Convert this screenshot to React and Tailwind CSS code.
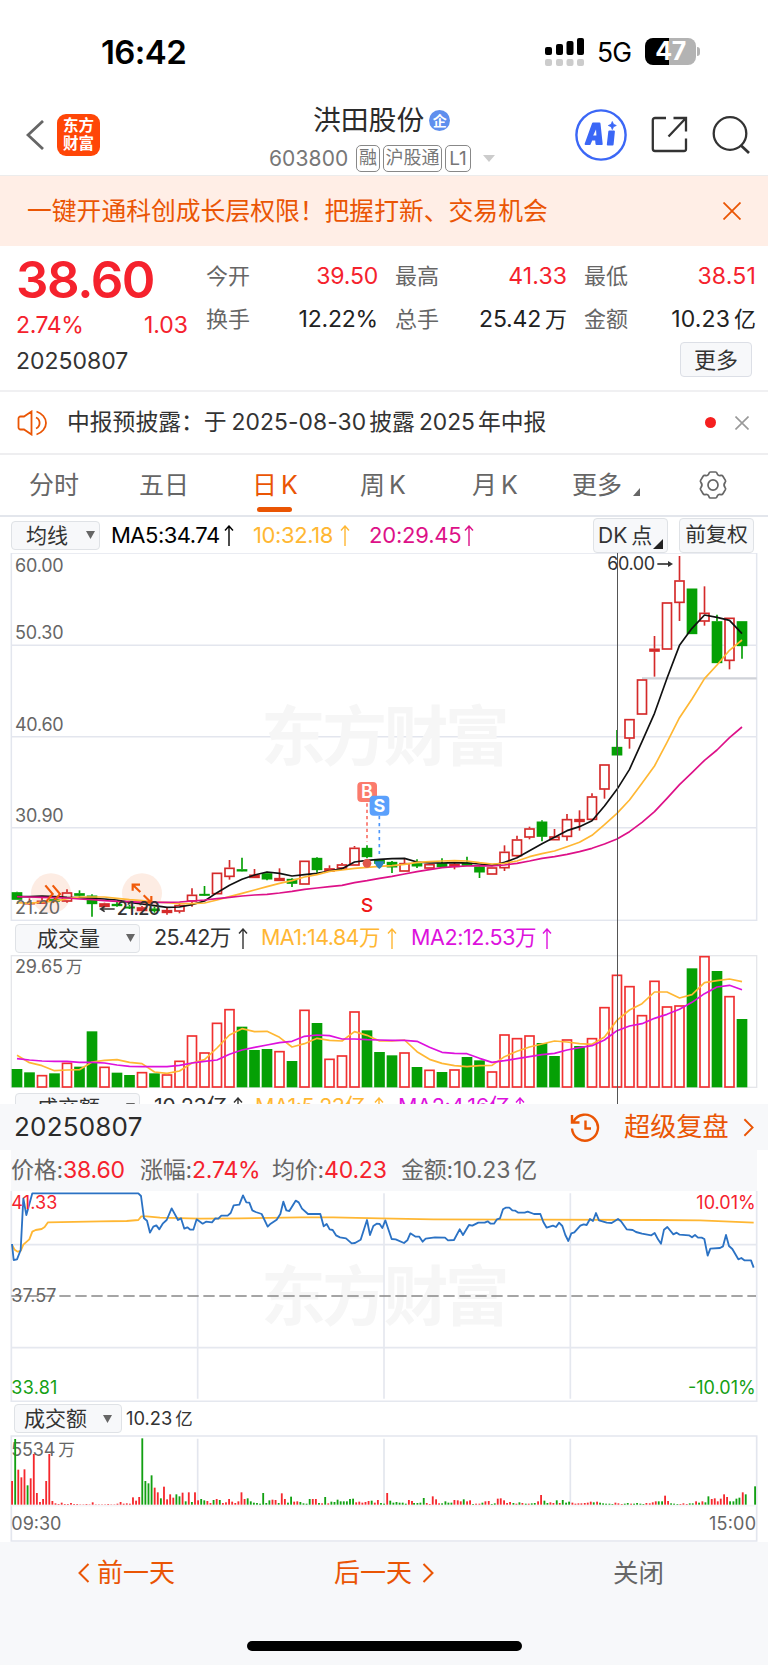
import React from "react";

const RED = "#f5222d";

/* ---------- data: chart coordinates are thirds of a CSS pixel ---------- */

// [direction, high, body top, body bottom, low]
const candles = [
  ["g", 1145, 1147, 1168, 1168], ["r", 1165, 1178, 1182, 1185], ["r", 1163, 1172, 1180, 1180], ["g", 1164, 1168, 1174, 1174],
  ["r", 1138, 1147, 1174, 1178], ["g", 1141, 1150, 1156, 1160], ["g", 1153, 1157, 1181, 1220], ["r", 1178, 1180, 1190, 1192],
  ["g", 1176, 1182, 1187, 1190], ["g", 1184, 1190, 1194, 1197], ["r", 1188, 1192, 1202, 1202], ["g", 1190, 1196, 1202, 1208],
  ["r", 1193, 1200, 1208, 1214], ["r", 1178, 1185, 1204, 1210], ["r", 1135, 1154, 1174, 1190], ["g", 1128, 1152, 1156, 1158],
  ["r", 1088, 1088, 1152, 1152], ["r", 1050, 1073, 1100, 1109], ["g", 1043, 1078, 1083, 1084], ["r", 1077, 1094, 1103, 1103],
  ["g", 1085, 1090, 1107, 1111], ["r", 1075, 1104, 1112, 1112], ["g", 1105, 1107, 1120, 1131], ["r", 1052, 1052, 1123, 1123],
  ["g", 1042, 1044, 1079, 1088], ["r", 1066, 1075, 1084, 1086], ["r", 1059, 1063, 1075, 1080], ["r", 1008, 1013, 1066, 1066],
  ["g", 1006, 1014, 1040, 1045], ["g", 1048, 1050, 1060, 1062], ["g", 1053, 1056, 1071, 1089], ["r", 1047, 1059, 1084, 1084],
  ["g", 1048, 1060, 1068, 1074], ["r", 1062, 1062, 1075, 1075], ["g", 1045, 1060, 1070, 1072], ["r", 1058, 1062, 1070, 1078],
  ["g", 1040, 1058, 1066, 1068], ["g", 1068, 1070, 1086, 1104], ["r", 1072, 1072, 1093, 1093], ["r", 1006, 1025, 1074, 1083],
  ["r", 977, 988, 1038, 1040], ["r", 950, 955, 982, 988], ["g", 931, 935, 979, 994], ["r", 957, 979, 990, 990],
  ["r", 912, 927, 980, 992], ["r", 901, 927, 935, 962], ["r", 850, 859, 929, 932], ["r", 763, 763, 838, 866],
  ["g", 660, 711, 735, 735], ["r", 627, 627, 685, 716], ["r", 508, 508, 613, 613], ["r", 378, 416, 424, 500],
  ["r", 277, 277, 418, 418], ["r", 138, 211, 278, 333], ["g", 236, 236, 371, 371], ["r", 229, 308, 334, 347],
  ["g", 314, 334, 458, 458], ["r", 323, 323, 452, 478], ["g", 334, 334, 407, 446],
];

const ma5 = [1160, 1160, 1158, 1160, 1162, 1163, 1165, 1167, 1170, 1177, 1182, 1187, 1192, 1191, 1184, 1173, 1148, 1126, 1108, 1095, 1086, 1090, 1098, 1094, 1090, 1083, 1076, 1056, 1051, 1048, 1046, 1045, 1056, 1059, 1059, 1058, 1059, 1062, 1066, 1057, 1043, 1022, 1001, 982, 962, 950, 932, 888, 838, 778, 695, 610, 505, 406, 355, 315, 322, 331, 371];
const ma10 = [1178, 1180, 1176, 1174, 1166, 1161, 1161, 1161, 1165, 1169, 1172, 1176, 1178, 1181, 1181, 1179, 1170, 1160, 1150, 1140, 1130, 1120, 1112, 1101, 1094, 1084, 1080, 1075, 1072, 1069, 1067, 1063, 1057, 1055, 1053, 1052, 1053, 1058, 1062, 1060, 1053, 1040, 1031, 1023, 1010, 997, 976, 944, 910, 870, 820, 768, 697, 623, 567, 506, 465, 421, 390];
const ma20 = [1160, 1161, 1162, 1163, 1164, 1167, 1169, 1172, 1174, 1175, 1177, 1177, 1177, 1176, 1173, 1170, 1166, 1162, 1158, 1155, 1153, 1149, 1144, 1138, 1134, 1130, 1126, 1118, 1112, 1105, 1099, 1092, 1085, 1079, 1073, 1070, 1068, 1067, 1068, 1065, 1060, 1053, 1045, 1040, 1033, 1025, 1015, 1002, 987, 965, 937, 905, 865, 824, 788, 751, 720, 683, 651];

const volumes = [477, 487, 495, 490, 458, 470, 364, 470, 488, 495, 486, 490, 493, 452, 376, 427, 338, 297, 350, 420, 417, 423, 453, 299, 339, 446, 436, 304, 361, 426, 436, 427, 471, 479, 486, 478, 441, 451, 484, 373, 384, 376, 399, 438, 388, 408, 384, 291, 194, 228, 315, 212, 289, 286, 175, 138, 183, 258, 327];
const volumeDirs = "ggrgrggrggrgrrrrrrgggrgrgrrrgggrgrgrggrrrrggrgrrrrrrrrgrgrg";
const vma1 = [436, 458, 467, 482, 480, 479, 456, 451, 449, 457, 461, 486, 490, 483, 459, 449, 414, 375, 356, 365, 364, 382, 411, 401, 385, 391, 393, 365, 376, 393, 393, 390, 425, 448, 460, 467, 470, 467, 466, 440, 424, 411, 402, 393, 396, 401, 403, 381, 331, 300, 281, 246, 246, 264, 254, 218, 212, 207, 215];
const vma2 = [446, 450, 453, 454, 454, 457, 457, 459, 465, 469, 470, 470, 470, 466, 459, 454, 450, 433, 420, 412, 405, 398, 394, 379, 375, 377, 387, 387, 389, 390, 391, 391, 394, 412, 427, 430, 431, 445, 457, 452, 446, 440, 434, 430, 420, 413, 407, 390, 362, 348, 341, 325, 313, 298, 277, 251, 231, 226, 239];

const intradayPrice =
  "36,312 41,360 51,358 62,330 70,175 79,225 97,160 415,160 423,168 432,235 441,242 450,278 460,260 469,256 478,268 489,250 500,240 515,205 534,240 543,235 553,266 562,262 571,269 580,269 590,238 608,251 618,245 636,247 646,235 655,236 664,227 683,227 692,219 701,196 718,194 729,166 739,187 748,188 757,211 767,216 785,222 803,260 812,251 830,239 841,222 850,185 859,211 868,213 887,182 896,187 906,206 924,222 961,222 971,259 980,252 989,268 998,270 1008,286 1020,292 1038,295 1055,310 1065,309 1082,299 1101,240 1110,285 1120,258 1130,251 1139,252 1147,264 1156,241 1165,268 1175,297 1187,298 1212,309 1222,301 1231,280 1247,290 1258,290 1268,305 1277,296 1305,292 1335,293 1344,301 1362,300 1379,268 1389,285 1407,255 1417,257 1435,248 1454,248 1463,244 1472,251 1482,251 1491,238 1500,235 1509,208 1517,203 1528,203 1537,211 1546,212 1555,218 1574,218 1583,215 1602,222 1621,222 1630,246 1640,263 1659,257 1668,261 1677,248 1687,258 1696,285 1705,303 1714,280 1723,277 1741,257 1751,253 1760,255 1770,237 1779,243 1788,219 1797,241 1820,248 1835,249 1854,237 1863,244 1880,268 1898,270 1908,276 1926,281 1954,286 1964,279 1974,298 1983,311 1992,269 2002,261 2020,283 2030,278 2039,284 2067,286 2076,292 2085,285 2094,293 2105,293 2113,297 2123,347 2131,326 2160,324 2169,319 2178,285 2187,318 2197,327 2215,358 2224,354 2233,361 2253,361 2261,383";
const intradayAvg =
  "36,315 44,329 53,335 62,333 70,314 88,298 97,275 107,270 125,267 134,261 144,247 300,244 380,243 415,240 424,229 440,229 480,233 600,236 720,235 900,232 1000,232 1140,235 1300,238 1620,239 1960,240 2100,241 2190,245 2261,248";

// minute turnover bars: direction + bar top, in order
const openBars = "r243 g117 r209 r232 r208 g256 r235 r162 r279 r306 r297 r243 r162 r303 r310 r312 r308 r312 r312 r309 r312 r312 r313 r313 r312 r313 r307 r313 r313 r313 r313 r312 r313 r313 r311 r306 r311 r310 r311 r292 r302 r291 g115 g243 g250 g226 r263 r277 g295 r260 r298 r283 r293 g283 g289 r278 g304 r277 g306 r277 r301 g297 g301 r303 r309 g300 r297 g300 r309 r307 r297 r305 r309 r304 r277 r297 g295 g304 g308 g309 g311 g279 g309 g301 r299 r300 g309 r280 r297 g308 g290 r305 r304 g306 g310 g311 g297 r297 r297 g309 r310 g291 r310 g305 g306 g299 g304 g304 g304 g297 g296 r307 r305 r308 r306 r303 g302 r308 r300 g309 g311 r279 g302 g308 g306 g308 g308 g311 r300 r303".split(" ");
const closeBars = [["g", 102, 309], ["g", 112, 309], ["g", 121, 308], ["g", 131, 294], ["r", 140, 309], ["r", 149, 312], ["r", 158, 289], ["r", 168, 298], ["r", 177, 310], ["g", 186, 310], ["g", 196, 304], ["g", 205, 308], ["g", 214, 308], ["r", 223, 300], ["r", 233, 301], ["r", 242, 304], ["g", 251, 298], ["r", 261, 304], ["r", 270, 301], ["g", 279, 312], ["r", 288, 311], ["r", 298, 311], ["g", 307, 308], ["r", 316, 304], ["r", 326, 303], ["g", 335, 312], ["g", 344, 310], ["r", 353, 296], ["r", 362, 295], ["r", 372, 301], ["r", 381, 309], ["r", 390, 306], ["g", 400, 309], ["r", 409, 311], ["g", 418, 307], ["r", 427, 309], ["g", 437, 311], ["r", 446, 311], ["g", 455, 310], ["g", 464, 309], ["r", 474, 304], ["r", 483, 285], ["g", 493, 302], ["g", 502, 309], ["r", 511, 307], ["r", 520, 309], ["g", 530, 301], ["r", 539, 309], ["g", 548, 300], ["g", 558, 308], ["g", 567, 305], ["r", 577, 308], ["r", 586, 311], ["r", 595, 310], ["r", 604, 310], ["r", 614, 309], ["r", 623, 308], ["r", 632, 305], ["g", 641, 307], ["r", 651, 305], ["g", 660, 308], ["g", 669, 310], ["g", 678, 311], ["g", 688, 311], ["g", 697, 312], ["r", 706, 308], ["r", 715, 310], ["r", 725, 312], ["g", 734, 311], ["g", 743, 309], ["r", 753, 311], ["g", 762, 311], ["g", 771, 309], ["g", 781, 311], ["g", 790, 312], ["r", 799, 309], ["r", 809, 310], ["r", 818, 307], ["r", 827, 304], ["g", 836, 304], ["g", 846, 304], ["r", 855, 287], ["r", 864, 303], ["g", 873, 310], ["g", 882, 311], ["g", 892, 312], ["r", 901, 312], ["r", 910, 310], ["r", 920, 312], ["g", 929, 310], ["g", 938, 310], ["r", 948, 304], ["g", 957, 308], ["r", 967, 304], ["g", 976, 307], ["g", 985, 289], ["r", 995, 297], ["r", 1004, 295], ["r", 1013, 304], ["r", 1022, 296], ["r", 1032, 283], ["r", 1041, 291], ["g", 1050, 304], ["g", 1060, 304], ["g", 1069, 296], ["g", 1078, 293], ["r", 1088, 277], ["g", 1097, 283], ["g", 1125, 259]];

const turnover = [
  ...openBars.map((b, i) => [b[0], 36 + i * 9.3, Number(b.slice(1))]),
  ...closeBars.map(([d, x, y]) => [d, x + 1140, y]),
];

const cx = (i) => 51 + i * 37.5;
const pts = (arr) => arr.map((y, i) => `${cx(i)},${y}`).join(" ");

/* ---------- small pieces ---------- */

function Chevron({ dir = "right", className }) {
  return (
    <svg viewBox="0 0 12 20" fill="none" stroke="currentColor" strokeWidth="2" className={className}>
      <path d={dir === "right" ? "M1.5 1 10.5 10 1.5 19" : "M10.5 1 1.5 10 10.5 19"} />
    </svg>
  );
}

function Dropdown({ label, className, gap }) {
  return (
    <div className={`flex h-[29px] shrink-0 items-center rounded-[4px] border border-[#dfe2e6] bg-[#f7f8fa] text-[21px] text-[#333] ${className}`}>
      <span className="whitespace-nowrap">{label}</span>
      <svg viewBox="0 0 9 8" className={`h-[8px] w-[9px] shrink-0 ${gap}`}>
        <path d="M0 0h9L4.5 8z" fill="#666" />
      </svg>
    </div>
  );
}

function Up({ className = "" }) {
  return (
    <svg viewBox="0 0 10 21" fill="none" stroke="currentColor" strokeWidth="1.4" className={`h-[21px] w-[10px] shrink-0 ${className}`}>
      <path d="M5 21V1M1 5.5 5 1l4 4.5" />
    </svg>
  );
}

function SvgText({ x, y, w, size = 54, fill = "#666", anchor = "start", weight = 400, children }) {
  return (
    <text x={x} y={y} fontSize={size} fill={fill} textAnchor={anchor} textLength={w} fontWeight={weight}>
      {children}
    </text>
  );
}

function Watermark({ y }) {
  return (
    <text x="783" y={y} textLength="746" fontSize="194" fontWeight="700" fill="#f6f6f6">
      东方财富
    </text>
  );
}

function StatusBar() {
  return (
    <div className="flex h-[105px] items-center pl-[101px]">
      <span className="w-[443px] text-[33px] font-semibold tracking-[-0.6px] text-black">16:42</span>
      <svg viewBox="0 0 40 28" className="mt-[-2px] h-[28px] w-[40px] shrink-0">
        <g fill="#000">
          <rect x="1" y="9" width="7" height="8" rx="2" />
          <rect x="12" y="6" width="7" height="11" rx="2" />
          <rect x="22.5" y="3" width="7" height="14" rx="2" />
          <rect x="33" y="0" width="7" height="17" rx="2" />
        </g>
        <g fill="#ccc">
          <rect x="1" y="21" width="7" height="7" rx="2" />
          <rect x="12" y="21" width="7" height="7" rx="2" />
          <rect x="22.5" y="21" width="7" height="7" rx="2" />
          <rect x="33" y="21" width="7" height="7" rx="2" />
        </g>
      </svg>
      <span className="ml-[13px] w-[48px] text-[26.5px] tracking-[-0.8px] text-black">5G</span>
      <div className="mt-[-2px] flex h-[27px] w-[51px] items-center justify-center rounded-[8px] bg-[linear-gradient(90deg,#000_47%,#b3b3b3_47%)] text-[25px] font-bold tracking-[-0.4px] text-white">
        47
      </div>
      <div className="ml-[1px] mt-[-2px] h-[9px] w-[3px] rounded-r-full bg-[#b3b3b3]" />
    </div>
  );
}

function Tag({ children, className }) {
  return (
    <span className={`flex h-[27px] items-center justify-center whitespace-nowrap rounded-[5px] border border-[#888] text-[18px] text-[#777] ${className}`}>
      {children}
    </span>
  );
}

function Header() {
  return (
    <header className="flex h-[71px] items-start border-b border-[#ececec] pl-[26px]">
      <svg viewBox="0 0 18 30" fill="none" stroke="#666" strokeWidth="2.8" className="mt-[15px] h-[30px] w-[18px]">
        <path d="M17 1 2 15l15 14" />
      </svg>
      <div className="ml-[13px] mt-[9px] flex h-[42px] w-[43px] flex-col items-center justify-center rounded-[9px] bg-[#ff4607] text-[15.5px] font-bold leading-[18px] text-white">
        <span>东方</span>
        <span>财富</span>
      </div>
      <div className="ml-[169px] w-[240px]">
        <div className="flex h-[31px] items-center pl-[44px]">
          <span className="text-[27.8px] text-[#2b2b2b]">洪田股份</span>
          <span className="ml-[5px] flex size-[21px] items-center justify-center rounded-full bg-[#5f8fee] text-[14px] font-bold text-white">企</span>
        </div>
        <div className="mt-[4px] flex h-[36px] items-center">
          <span className="w-[87px] text-[21px] tracking-[0.1px] text-[#777]">603800</span>
          <Tag className="w-[24px]">融</Tag>
          <Tag className="ml-[3px] w-[59px]">沪股通</Tag>
          <Tag className="ml-[3px] w-[26px] text-[19px]">L1</Tag>
          <svg viewBox="0 0 12 7" className="ml-[12px] h-[7px] w-[12px]">
            <path d="M0 0h12L6 7z" fill="#ccc" />
          </svg>
        </div>
      </div>
      <svg viewBox="0 0 52 52" className="ml-[66px] mt-[4px] size-[52px] shrink-0">
        <circle cx="26" cy="26" r="24.6" fill="none" stroke="#3b67f6" strokeWidth="2.4" />
        <g stroke="#3b67f6" fill="#3b67f6" strokeLinejoin="round">
          <path d="M18 14.500h6.500l2.200 20.500h-5.200l-.4-4.500h-4.600l-1.900 4.500h-4z" strokeWidth="2" />
          <path d="M18.200 26.500h3.200l-.4-6z" fill="#fff" stroke="none" />
          <path d="M34.300 22.500h4.600l-1.300 13h-4.800z" strokeWidth="2" />
          <path d="M37.300 12.500l1.200 2.800 2.800 1.200-2.800 1.200-1.200 2.800-1.200-2.800-2.800-1.200 2.800-1.200z" strokeWidth="0.800" />
        </g>
      </svg>
      <svg viewBox="0 0 37 37" fill="none" stroke="#333" strokeWidth="2.300" className="ml-[24px] mt-[11px] size-[37px] shrink-0">
        <path d="M15 2H4a2.200 2.200 0 0 0-2.200 2.200v28.600A2.200 2.200 0 0 0 4 35h29a2 2 0 0 0 2-2V22.500M22.500 2H35v13.500M35 2 17.500 20.500" />
      </svg>
      <svg viewBox="0 0 38 38" fill="none" stroke="#333" strokeWidth="2.300" className="ml-[24px] mt-[11px] size-[38px] shrink-0">
        <circle cx="18" cy="17.500" r="16.300" />
        <path d="M28.500 29 37 37" strokeWidth="2.700" />
      </svg>
    </header>
  );
}

function Quote() {
  const cell = "flex w-[172px] items-center justify-between";
  return (
    <section className="flex h-[146px] items-start border-b-2 border-[#f0f0f2] pl-[17px] text-[22px]">
      <div className="w-[171px] shrink-0" style={{ color: RED }}>
        <div className="ml-[-1px] mt-[8px] flex h-[50px] items-center text-[51px] font-semibold tracking-[-1.4px]">38.60</div>
        <div className="mt-[8px] flex h-[26px] items-center justify-between text-[23px] tracking-[-0.4px]">
          <span className="ml-[-1px]">2.74%</span>
          <span className="tracking-[0px]">1.03</span>
        </div>
        <div className="ml-[-1px] mt-[10px] flex h-[26px] items-center text-[23px] tracking-[0px] text-[#333]">20250807</div>
      </div>
      <div className="ml-[18px] flex flex-col">
        <div className="mt-[17px] flex h-[26px] gap-[17px] text-[#666]">
          <div className={cell}><span>今开</span><span className="text-[23px] tracking-[-0.2px] text-[#f5222d]">39.50</span></div>
          <div className={cell}><span>最高</span><span className="text-[23px] tracking-[0.1px] text-[#f5222d]">41.33</span></div>
          <div className={cell}><span>最低</span><span className="text-[23px] tracking-[0.2px] text-[#f5222d]">38.51</span></div>
        </div>
        <div className="mt-[17px] flex h-[26px] gap-[17px] text-[#666]">
          <div className={cell}><span>换手</span><span className="text-[23px] tracking-[-0.2px] text-[#222]">12.22%</span></div>
          <div className={cell}><span>总手</span><span className="flex items-center text-[#222]"><span className="text-[23px] tracking-[-0.2px]">25.42</span><span className="ml-[4px]">万</span></span></div>
          <div className={cell}><span>金额</span><span className="flex items-center text-[#222]"><span className="text-[23px] tracking-[0.1px]">10.23</span><span className="ml-[4px]">亿</span></span></div>
        </div>
        <div className="ml-[474px] mt-[10px] flex h-[35px] w-[72px] items-center justify-center rounded-[4px] border border-[#dcdfe6] bg-[#f7f8fa] text-[22px] text-[#333]">更多</div>
      </div>
    </section>
  );
}

function Notice() {
  return (
    <section className="flex h-[63px] items-center border-b-2 border-[#eeeef0] pl-[17px]">
      <svg viewBox="0 0 31 26" fill="none" stroke="#ea5504" strokeWidth="1.800" className="h-[26px] w-[31px] shrink-0">
        <path d="M14.500 1.500v23L7 19.500H3.500a2 2 0 0 1-2-2v-9a2 2 0 0 1 2-2H7zM19 7.500a6 6 0 0 1 0 11M19.500 1.500c5.500 1.800 9.500 6.300 9.500 11.500s-4 9.700-9.500 11.500" />
      </svg>
      <div className="ml-[19px] flex w-[638px] items-center whitespace-nowrap text-[22.800px] text-[#333]">
        <span>中报预披露：于</span>
        <span className="ml-[5px] tracking-[0.100px]">2025-08-30</span>
        <span className="ml-[3px]">披露</span>
        <span className="ml-[4px] tracking-[0px]">2025</span>
        <span className="ml-[3px]">年中报</span>
      </div>
      <span className="size-[11px] rounded-full bg-[#f51f1f]" />
      <svg viewBox="0 0 14 14" stroke="#999" strokeWidth="1.600" className="ml-[19px] size-[14px]">
        <path d="M0.500 0.500l13 13M13.500 0.500l-13 13" />
      </svg>
    </section>
  );
}

function Tabs() {
  return (
    <nav className="flex h-[62px] items-center border-b-2 border-[#e3e6ec] text-[25px] text-[#666]">
      <span className="ml-[29px] w-[110px]">分时</span>
      <span className="w-[113px]">五日</span>
      <span className="relative flex h-full w-[108px] items-center whitespace-nowrap text-[#ea5504]">
        日<span className="ml-[4px]">K</span>
        <i className="absolute bottom-[3px] left-[5px] h-[5px] w-[35px] rounded-full bg-[#ea5504]" />
      </span>
      <span className="flex w-[112px]">周<span className="ml-[4px]">K</span></span>
      <span className="flex w-[100px]">月<span className="ml-[4px]">K</span></span>
      <span className="flex w-[126px] items-center">
        更多
        <svg viewBox="0 0 7 8" className="ml-[11px] mt-[14px] h-[8px] w-[7px]"><path d="M7 0v8H0z" fill="#666" /></svg>
      </span>
      <svg viewBox="0 0 30 28" fill="none" stroke="#666" strokeWidth="1.700" strokeLinejoin="round" className="h-[28px] w-[30px]">
        <path d="M11 2.200Q11.300 1 12.500 1h5Q18.700 1 19 2.200c.5 1.900 2 2.700 3.800 2.200q1.400-.4 2.100.8l2.500 4.200q.6 1.100-.3 2c-1.400 1.700-1.400 3.500 0 5.200q.9.900.3 2l-2.500 4.200q-.7 1.200-2.100.8c-1.800-.5-3.300.3-3.800 2.200q-.3 1.200-1.500 1.200h-5q-1.200 0-1.500-1.200c-.5-1.900-2-2.700-3.800-2.200q-1.400.4-2.100-.8L2.600 18.600q-.6-1.100.3-2c1.400-1.700 1.400-3.500 0-5.200q-.9-.9-.3-2l2.500-4.200q.7-1.200 2.100-.8c1.800.5 3.300-.3 3.800-2.200z" />
        <ellipse cx="15" cy="14" rx="5" ry="5.200" />
      </svg>
    </nav>
  );
}

function CandleChart() {
  return (
    <svg viewBox="0 129 2304 1104" className="block h-[368px] w-[768px]">
      <g fill="none" stroke="#e3e6ee" strokeWidth="4.500">
        <rect x="34" y="129" width="2236" height="1102" />
        <path d="M34 406H2270M34 680H2270M34 953H2270" />
      </g>
      <Watermark y="750" />
      <path d="M1926 505H2270" stroke="#cfd2d8" strokeWidth="7" />
      <SvgText x="45" y="187" w="146">60.00</SvgText>
      <SvgText x="45" y="388" w="146">50.30</SvgText>
      <SvgText x="45" y="662" w="146">40.60</SvgText>
      <SvgText x="45" y="937" w="146">30.90</SvgText>
      <circle cx="153" cy="1150" r="60" fill="#fdece3" />
      <circle cx="426" cy="1150" r="60" fill="#fdece3" />
      {candles.map(([dir, high, top, bottom, low], i) => {
        const x = cx(i);
        const up = dir === "r";
        const color = up ? "#d42a2a" : "#05a005";
        const hollow = up && bottom - top > 10;
        return (
          <g key={i} stroke={color} strokeWidth="5">
            {high < top && <path d={`M${x} ${high}V${top}`} />}
            {low > bottom && <path d={`M${x} ${bottom}V${low}`} />}
            {hollow ? (
              <rect x={x - 13.5} y={top + 2} width="27" height={bottom - top - 3} fill={i < 10 ? "none" : "#fff"} />
            ) : (
              <rect x={x - 13.5} y={top + 2} width="27" height={Math.max(1, bottom - top - 3)} fill={color} />
            )}
          </g>
        );
      })}
      <g fill="none" strokeWidth="5" strokeLinejoin="round">
        <polyline points={pts(ma5)} stroke="#111" />
        <polyline points={pts(ma10)} stroke="#ffb733" />
        <polyline points={pts(ma20)} stroke="#dd1188" />
      </g>
      <g fill="none" stroke="#f05a0a" strokeWidth="6.500">
        <path d="M136 1126 158 1152 136 1178M158 1126 180 1152 158 1178" />
        <path d="M421 1146 398 1124M398 1142V1124H420M431 1156 454 1178M454 1158V1178H434" />
      </g>
      <SvgText x="45" y="1213" w="135">21.20</SvgText>
      <path d="M344 1197H302M314 1189 302 1197 314 1205" fill="none" stroke="#333" strokeWidth="5" />
      <SvgText x="350" y="1216" w="130" fill="#333" weight="500">21.20</SvgText>
      <SvgText x="1822" y="181" w="143" fill="#333" weight="400">60.00</SvgText>
      <path d="M1972 162H2012" stroke="#333" strokeWidth="5" />
      <path d="M2004 153 2019 162 2004 171z" fill="#333" />
      <path d="M1101 880V995" stroke="#fa7268" strokeWidth="5" strokeDasharray="10 9" />
      <path d="M1138 918V1032" stroke="#4d97fb" strokeWidth="5" strokeDasharray="10 11" />
      <circle cx="1101" cy="1060" r="13" fill="#e0574a" />
      <path d="M1124 1054H1152Q1150 1070 1138 1077 1126 1070 1124 1054z" fill="#2b83c4" />
      <rect x="1072" y="816" width="59" height="60" rx="12" fill="#fb7b6c" />
      <SvgText x="1101" y="864" size="54" fill="#fff" anchor="middle" weight="600">B</SvgText>
      <rect x="1109" y="857" width="59" height="60" rx="12" fill="#5aa0fc" />
      <SvgText x="1138" y="906" size="54" fill="#fff" anchor="middle" weight="700">S</SvgText>
      <SvgText x="1101" y="1205" size="58" fill="#f01818" anchor="middle" weight="500">S</SvgText>
    </svg>
  );
}

function VolumeChart() {
  return (
    <svg viewBox="0 135 2304 399" className="block h-[133px] w-[768px]">
      <rect x="34" y="137" width="2236" height="395" fill="none" stroke="#e5e6ea" strokeWidth="4" />
      {volumes.map((y, i) =>
        volumeDirs[i] === "r" ? (
          <rect key={i} x={cx(i) - 13.5} y={y + 2} width="27" height={529 - y} fill="#fff" stroke="#f03030" strokeWidth="5" />
        ) : (
          <rect key={i} x={cx(i) - 16} y={y} width="32" height={532 - y} fill="#05a005" />
        )
      )}
      <g fill="none" strokeWidth="5" strokeLinejoin="round">
        <polyline points={pts(vma1)} stroke="#ffb733" />
        <polyline points={pts(vma2)} stroke="#dd11dd" />
      </g>
      <SvgText x="45" y="189" w="144">29.65</SvgText>
      <SvgText x="198" y="190" size="50">万</SvgText>
    </svg>
  );
}

function KlinePanel() {
  return (
    <section className="relative h-[587px] overflow-hidden">
      <div className="flex h-[36px] items-center pl-[11px] text-[22px]">
        <Dropdown label="均线" className="w-[89px] pl-[14px]" gap="ml-[18px]" />
        <span className="ml-[11px] w-[108px] tracking-[-0.5px] text-black">MA5:34.74</span>
        <Up className="ml-[5px]" />
        <span className="ml-[19px] w-[83px] tracking-[-0.4px] text-[#ffb733]">10:32.18</span>
        <Up className="ml-[4px] text-[#ffb733]" />
        <span className="ml-[19px] w-[90px] tracking-[-0.2px] text-[#dd1188]">20:29.45</span>
        <Up className="ml-[5px] text-[#dd1188]" />
        <span className="relative ml-[119px] flex h-[35px] w-[75px] items-center whitespace-nowrap rounded-[4px] border border-[#dfe2e6] bg-[#f7f8fa] pl-[4px] text-[21px] text-[#333]">
          DK<span className="ml-[4px]">点</span>
          <svg viewBox="0 0 10 10" className="absolute bottom-[3px] right-[4px] size-[10px]"><path d="M10 0v10H0z" fill="#222" /></svg>
        </span>
        <span className="ml-[11px] flex h-[35px] w-[75px] items-center justify-center whitespace-nowrap rounded-[4px] border border-[#dfe2e6] bg-[#f7f8fa] text-[20.8px] text-[#333]">前复权</span>
      </div>
      <CandleChart />
      <div className="flex h-[34px] items-center pl-[15px] text-[21.5px]">
        <Dropdown label="成交量" className="w-[125px] pl-[21px]" gap="ml-[26px]" />
        <span className="ml-[14px] w-[78px] whitespace-nowrap tracking-[-0.6px] text-[#333]">25.42万</span>
        <Up className="ml-[6px] text-[#333]" />
        <span className="ml-[13px] w-[121px] whitespace-nowrap tracking-[-0.6px] text-[#ffb733]">MA1:14.84万</span>
        <Up className="ml-[5px] text-[#ffb733]" />
        <span className="ml-[14px] w-[126px] whitespace-nowrap tracking-[-0.4px] text-[#dd11dd]">MA2:12.53万</span>
        <Up className="ml-[5px] text-[#dd11dd]" />
      </div>
      <VolumeChart />
      <div className="flex h-[38px] items-center pl-[15px] text-[21.500px]">
        <Dropdown label="成交额" className="w-[125px] pl-[21px]" gap="ml-[26px]" />
        <span className="ml-[14px] w-[73px] whitespace-nowrap tracking-[-0.400px] text-[#333]">10.23亿</span>
        <Up className="ml-[6px] text-[#333]" />
        <span className="ml-[12px] w-[114px] whitespace-nowrap tracking-[-0.500px] text-[#ffb733]">MA1:5.23亿</span>
        <Up className="ml-[5px] text-[#ffb733]" />
        <span className="ml-[14px] w-[111px] whitespace-nowrap tracking-[-0.300px] text-[#dd11dd]">MA2:4.16亿</span>
        <Up className="ml-[6px] text-[#dd11dd]" />
      </div>
      <i className="absolute bottom-0 left-[617px] top-[36px] w-px bg-[#555]" />
    </section>
  );
}

function ReplayPanel() {
  return (
    <section className="flex flex-1 flex-col">
      <div className="flex h-[46px] items-center bg-[#f7f8fa] pl-[14px]">
        <span className="w-[556px] text-[26px] tracking-[0.200px] text-[#2b2b2b]">20250807</span>
        <svg viewBox="0 0 30 30" fill="none" stroke="#ea5504" strokeWidth="2.400" className="size-[30px] shrink-0">
          <path d="M3.500 9.500A13 13 0 1 1 2 16.500M2 3v7.500h7.500M15.500 8.500v8H21" />
        </svg>
        <span className="ml-[24px] text-[26.200px] text-[#ea5504]">超级复盘</span>
        <Chevron className="ml-[14px] h-[19px] w-[11px] text-[#ea5504]" />
      </div>
      <div className="mx-[11px] flex h-[41px] items-center whitespace-nowrap bg-[#f7f8fa] text-[23px] tracking-[-0.2px] text-[#666]">
        <span className="w-[129px]">价格:<span className="text-[#f5222d]">38.60</span></span>
        <span className="w-[132px]">涨幅:<span className="text-[#f5222d]">2.74%</span></span>
        <span className="w-[129px]">均价:<span className="text-[#f5222d]">40.23</span></span>
        <span>金额:10.23<span className="ml-[4px]">亿</span></span>
      </div>
      <svg viewBox="0 153 2304 633" className="block h-[211px] w-[768px]">
        <Watermark y="540" />
        <g fill="none" stroke="#e5e8ef" strokeWidth="5">
          <path d="M34 153V784H2270V153M34 314H2270M34 623H2270M593 160V776M1152 160V776M1711 160V776" />
        </g>
        <path d="M34 468H2268" stroke="#888" strokeWidth="5" strokeDasharray="34 14" />
        <polyline points={intradayAvg} fill="none" stroke="#ffb733" strokeWidth="5.500" strokeLinejoin="round" />
        <polyline points={intradayPrice} fill="none" stroke="#2b72c4" strokeWidth="5.500" strokeLinejoin="round" />
        <SvgText x="34" y="206" w="138" fill="#f5222d">41.33</SvgText>
        <SvgText x="34" y="485" w="135">37.57</SvgText>
        <SvgText x="34" y="763" w="138" fill="#14a014">33.81</SvgText>
        <SvgText x="2089" y="206" w="178" fill="#f5222d">10.01%</SvgText>
        <SvgText x="2064" y="763" w="203" fill="#14a014">-10.01%</SvgText>
      </svg>
      <div className="flex h-[33px] items-center pl-[14px]">
        <Dropdown label="成交额" className="w-[108px] pl-[9px]" gap="ml-[16px]" />
        <span className="ml-[4px] text-[18.300px] text-[#333]">10.23<span className="ml-[3px] text-[17.500px]">亿</span></span>
      </div>
      <svg viewBox="0 105 2304 321" className="block h-[107px] w-[768px]">
        <g fill="none" stroke="#e3e6ee" strokeWidth="5">
          <path d="M34 108H2270V423H34zM593 116V312M1152 116V312M1711 116V312" />
          <path d="M34 317H2270" stroke="#f4f5f8" />
        </g>
        <SvgText x="34" y="168" w="132">5534</SvgText>
        <SvgText x="175" y="168" size="50">万</SvgText>
        {turnover.map(([d, x, y], i) => (
          <rect key={i} x={x - 2.500} y={y} width="5.500" height={314 - y} fill={d === "r" ? "#f5282d" : "#12a012"} />
        ))}
        <SvgText x="34" y="391" w="150">09:30</SvgText>
        <SvgText x="2127" y="391" w="141">15:00</SvgText>
      </svg>
      <footer className="flex flex-1 flex-col items-center bg-[#f7f8fa] text-[26px] text-[#ea5504]">
        <div className="flex h-[62px] w-full items-center">
          <Chevron dir="left" className="ml-[78px] h-[20px] w-[12px]" />
          <span className="ml-[7px] w-[237px]">前一天</span>
          <span>后一天</span>
          <Chevron className="ml-[10px] h-[20px] w-[12px]" />
          <span className="ml-[179px] text-[25.500px] text-[#666]">关闭</span>
        </div>
        <div className="mt-[37px] h-[10px] w-[275px] rounded-full bg-black" />
      </footer>
    </section>
  );
}

export default function App() {
  return (
    <main lang="zh-CN" className="flex h-[1665px] w-[768px] flex-col overflow-hidden bg-white font-['Inter','Noto_Sans_CJK_SC',sans-serif] leading-none">
      <StatusBar />
      <Header />
      <div className="flex h-[70px] items-center justify-between bg-[#ffeee6] pl-[27px] pr-[27px] text-[24.8px] text-[#ea5504]">
        <span className="whitespace-nowrap">一键开通科创成长层权限！把握打新、交易机会</span>
        <svg viewBox="0 0 18 18" stroke="#ea5504" strokeWidth="1.800" className="size-[18px]">
          <path d="M0.500 0.500l17 17M17.500 0.500l-17 17" />
        </svg>
      </div>
      <Quote />
      <Notice />
      <Tabs />
      <KlinePanel />
      <ReplayPanel />
    </main>
  );
}
